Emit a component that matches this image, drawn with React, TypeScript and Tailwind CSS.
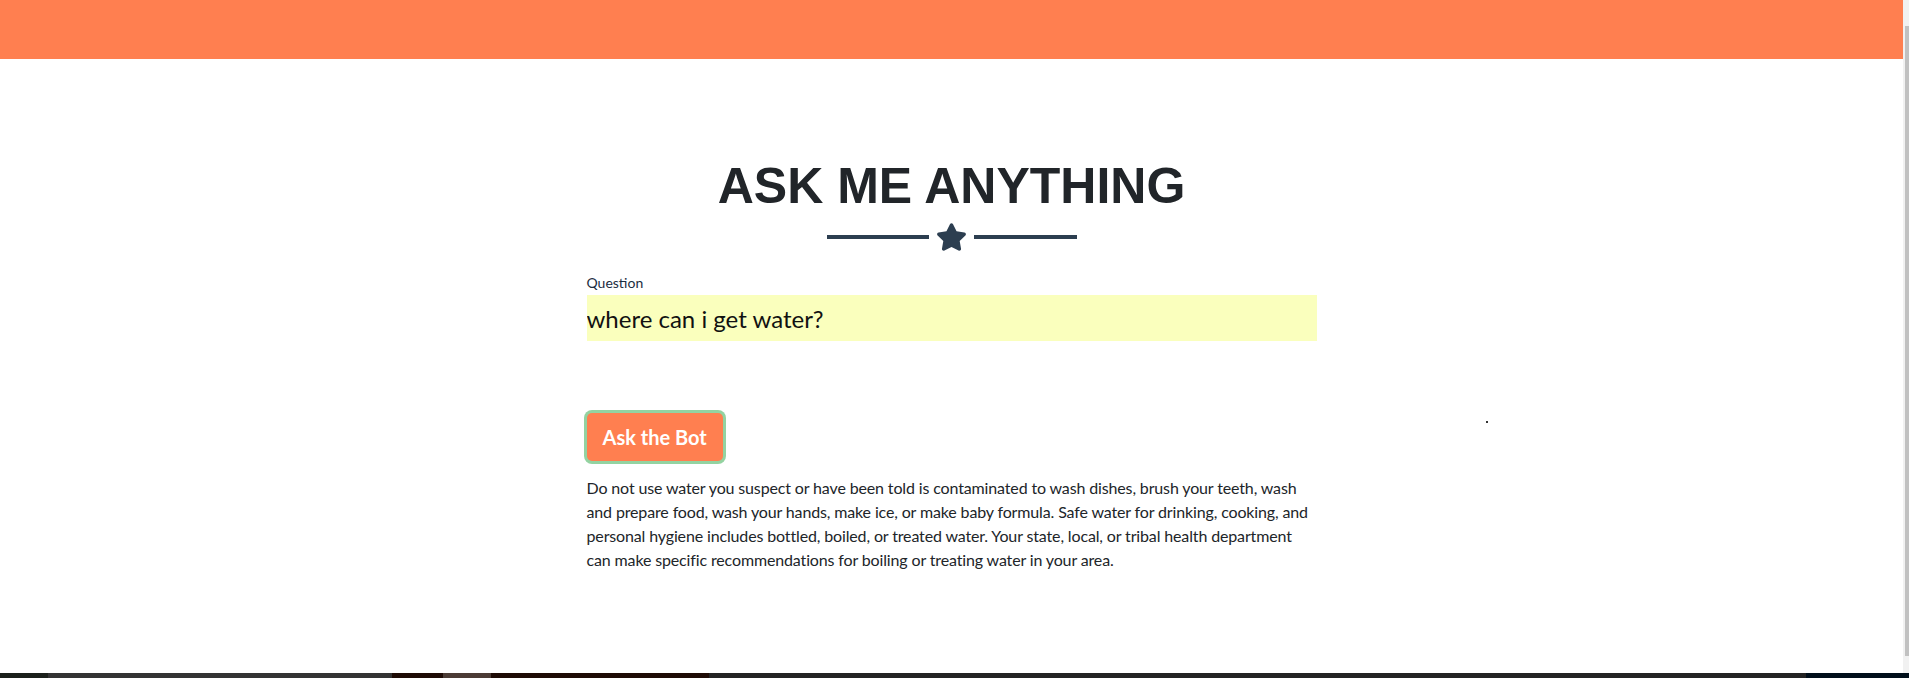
import React from "react";

const lato = "font-['Lato','Noto_Sans',sans-serif]";

function StarIcon() {
  return (
    <svg viewBox="0 0 576 512" className="h-[28px] w-[31px]" fill="#2c3e50">
      <path d="M259.3 17.8L194 150.2 47.9 171.5c-26.2 3.8-36.7 36.1-17.7 54.6l105.7 103-25 145.5c-4.5 26.3 23.2 46 46.4 33.7L288 439.6l130.7 68.7c23.2 12.2 50.9-7.4 46.4-33.7l-25-145.5 105.7-103c19-18.5 8.5-50.8-17.7-54.6L382 150.2 316.7 17.8c-11.7-23.6-45.6-23.9-57.4 0z" />
    </svg>
  );
}

function Divider() {
  return (
    <div className="mt-[12px] flex items-center">
      <div className="h-[4px] w-[102px] bg-[#2c3e50]" />
      <div className="mx-[7px] flex">
        <StarIcon />
      </div>
      <div className="h-[4px] w-[103px] bg-[#2c3e50]" />
    </div>
  );
}

function AskForm() {
  return (
    <div className={`mx-auto w-[730px] ${lato}`}>
      <label className="mt-[21px] block text-[14px] leading-[21px] text-[#1c2d3f]">Question</label>
      <input
        readOnly
        defaultValue="where can i get water?"
        className="mt-[2px] block h-[46px] w-full bg-[#faffbd] p-0 text-[24px] text-[#111] outline-none"
      />
      <button
        type="button"
        className="mt-[72px] rounded-[5px] bg-[#ff7f50] px-[16px] py-[9px] text-[20px] font-bold leading-[30px] text-white ring-[3px] ring-[#93d3a1]"
      >
        Ask the Bot
      </button>
      <p className="mt-[15px] text-[16px] leading-[24px] tracking-[-0.14px] text-[#212529]">
        Do not use water you suspect or have been told is contaminated to wash dishes, brush your teeth, wash
        and prepare food, wash your hands, make ice, or make baby formula. Safe water for drinking, cooking, and
        personal hygiene includes bottled, boiled, or treated water. Your state, local, or tribal health department
        can make specific recommendations for boiling or treating water in your area.
      </p>
    </div>
  );
}

function Scrollbar() {
  return (
    <div className="flex w-[6px] shrink-0 flex-col bg-[#f1f1f1] pt-[26px]">
      <div className="ml-[2px] h-[630px] bg-[#c1c1c1]" />
    </div>
  );
}

function Taskbar() {
  return (
    <div className="flex h-[5px] w-full shrink-0">
      <div className="w-[48px] bg-[#1b201b]" />
      <div className="w-[344px] bg-[#333333]" />
      <div className="w-[51px] bg-[#1e0b05]" />
      <div className="w-[48px] bg-[#4b3b35]" />
      <div className="w-[218px] bg-[#1e0b05]" />
      <div className="w-[1097px] bg-[#232323]" />
      <div className="flex-1 bg-[#000e1a]" />
    </div>
  );
}

export default function App() {
  return (
    <div className="flex h-[678px] w-full flex-col overflow-hidden bg-white">
      <div className="flex h-[673px]">
        <main className="relative flex min-w-0 flex-1 flex-col">
          <nav className="h-[59px] shrink-0 bg-[#ff7f50]" />
          <section className="flex-1 pt-[102px]">
            <div className="flex flex-col items-center">
              <h2 className="font-['Liberation_Sans','Arial',sans-serif] text-[50px] font-bold uppercase leading-none text-[#212529]">
                Ask Me Anything
              </h2>
              <Divider />
            </div>
            <AskForm />
          </section>
          <span className="absolute left-[1486px] top-[421px] h-[2px] w-[2px] bg-[#333]" />
        </main>
        <Scrollbar />
      </div>
      <Taskbar />
    </div>
  );
}
